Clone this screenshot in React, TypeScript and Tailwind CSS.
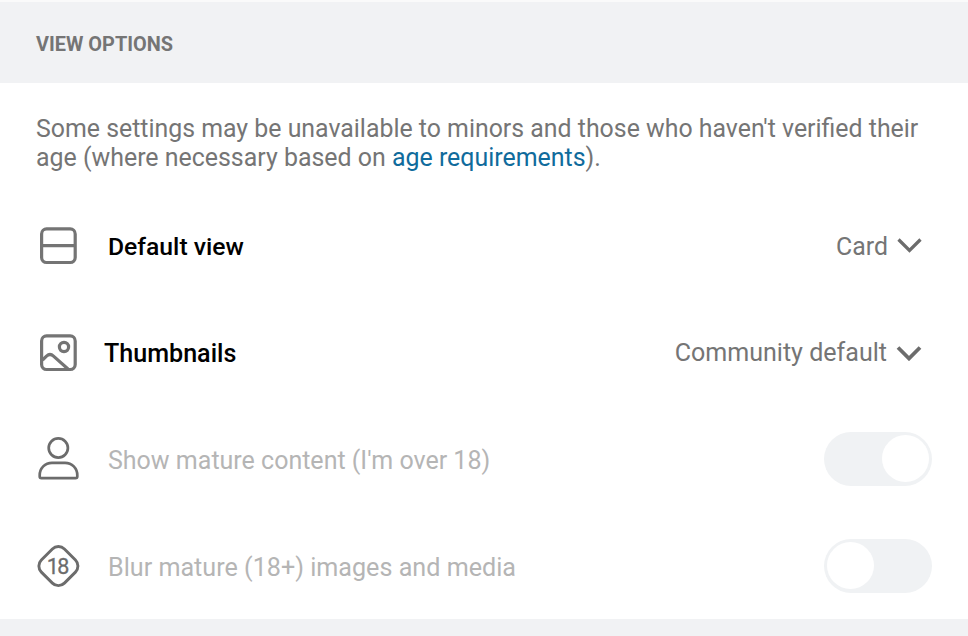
import type { ReactNode } from "react";

function LayoutIcon() {
  return (
    <svg width="44" height="44" viewBox="0 0 44 44" fill="none" stroke="#747474" strokeWidth="3.2">
      <rect x="5.6" y="5.9" width="33.6" height="33.6" rx="5" />
      <path d="M5.6 22.7h33.6" />
    </svg>
  );
}

function ImageIcon() {
  return (
    <svg width="44" height="44" viewBox="0 0 44 44" fill="none" stroke="#747474" strokeWidth="3.2">
      <rect x="5.6" y="5.9" width="33.6" height="33.6" rx="5" />
      <circle cx="28" cy="17" r="4.6" />
      <path d="M6.5 30l4-3.900q3.500-3.200 7 0L32 39" />
    </svg>
  );
}

function PersonIcon() {
  return (
    <svg width="44" height="44" viewBox="0 0 44 44" fill="none" stroke="#6c6c6c" strokeWidth="2.7">
      <circle cx="22.3" cy="11" r="9.6" />
      <path d="M16 25.8h13c7 0 12.300 5.500 12.300 12.500v1.200q0 1.700-1.700 1.700H5.400q-1.700 0-1.700-1.700v-1.200c0-7 5.300-12.500 12.300-12.500z" />
    </svg>
  );
}

function MatureIcon() {
  return (
    <svg width="44" height="44" viewBox="0 0 44 44" fill="none" stroke="#6c6c6c" strokeWidth="2.9">
      <rect x="6.1" y="5.8" width="32.600" height="32.600" rx="8.5" transform="rotate(45 22.4 22.1)" />
      <text x="21.3" y="29.800" textAnchor="middle" fontSize="21.5" letterSpacing="-1.6" fill="#6c6c6c" stroke="#6c6c6c" strokeWidth="0.3">18</text>
    </svg>
  );
}

function Chevron({ bold = false }: { bold?: boolean }) {
  return (
    <svg width="26" height="18" viewBox="0 0 26 18" fill="none" stroke="#6c6c6c" strokeWidth={bold ? 3.8 : 3.2}>
      <path d={bold ? "M2 4.500l11 11L24 4.500" : "M2.500 3.500l11 11L24.500 3.500"} />
    </svg>
  );
}

function Toggle({ on = false }: { on?: boolean }) {
  return (
    <div className={`flex h-[54px] w-[108px] items-center rounded-full bg-[#f0f2f4] px-[3px] ${on ? "justify-end" : "justify-start"}`}>
      <div className="size-[47px] rounded-full bg-white" />
    </div>
  );
}

function Row({ icon, label, children }: { icon: ReactNode; label: ReactNode; children: ReactNode }) {
  return (
    <div className="flex h-[107px] items-center px-9">
      <div className="w-[72px] shrink-0">{icon}</div>
      <div className="flex-1">{label}</div>
      {children}
    </div>
  );
}

export default function App() {
  return (
    <div className="flex h-[636px] w-[968px] flex-col overflow-hidden bg-white font-['Roboto',sans-serif] text-[24.88px] leading-[29px] text-[#757575]">
      <header className="flex h-[83px] shrink-0 items-center border-t-2 border-[#fafafa] bg-[#f1f2f4] px-9 pt-[3px] text-[19.9px] font-bold">
        VIEW OPTIONS
      </header>
      <p className="h-[109px] shrink-0 whitespace-nowrap px-9 pt-[31px]">
        Some settings may be unavailable to minors and those who haven't verified their
        <br />
        <span className="text-[24.93px]">
          age (where necessary based on <a className="text-[#106b9c]">age requirements</a>).
        </span>
      </p>
      <Row icon={<LayoutIcon />} label={<p className="pt-0.5 text-[24.7px] font-medium text-black">Default view</p>}>
        <div className="flex items-center gap-2 pr-2.5">
          <span className="pt-0.5">Card</span>
          <Chevron />
        </div>
      </Row>
      <Row icon={<ImageIcon />} label={<p className="-ml-1 pt-0.5 text-[25.1px] font-medium text-black">Thumbnails</p>}>
        <div className="flex items-center gap-[9px] pr-2.5">
          <span className="pt-px text-[25.05px]">Community default</span>
          <Chevron bold />
        </div>
      </Row>
      <Row icon={<PersonIcon />} label={<p className="pt-1 text-[25px] text-[#b5b5b5]">Show mature content (I'm over 18)</p>}>
        <Toggle on />
      </Row>
      <Row icon={<MatureIcon />} label={<p className="pt-1 text-[25.15px] text-[#b5b5b5]">Blur mature (18+) images and media</p>}>
        <Toggle />
      </Row>
      <div className="h-[17px] shrink-0 bg-[#f1f2f4]" />
    </div>
  );
}
